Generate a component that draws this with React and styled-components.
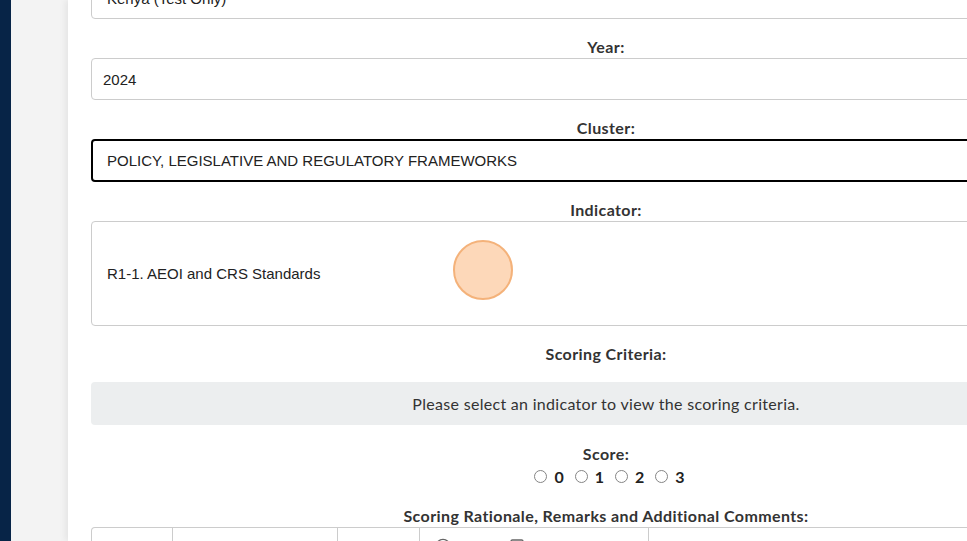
import React from "react";
import styled, { createGlobalStyle } from "styled-components";
import { Image, Link2, Smile } from "lucide-react";

const GlobalStyle = createGlobalStyle`
    html, body {
        margin: 0;
        padding: 0;
        overflow: hidden;
        background: #f3f3f3;
    }
    * { box-sizing: border-box; }
`;

const Shell = styled.div`
    display: flex;
    height: 541px;
    overflow: hidden;
`;

const Sidebar = styled.div`
    width: 11px;
    flex: none;
    background: #072447;
`;

const Gutter = styled.div`
    flex: 1;
    display: flex;
    padding-left: 57px;
    background: #f3f3f3;
    min-width: 0;
`;

const Panel = styled.div`
    flex: none;
    width: 1076px;
    padding: 0 23px;
    background: #ffffff;
    box-shadow: -3px 0 6px rgba(0, 0, 0, 0.06);
`;

const Form = styled.div`
    display: flex;
    flex-direction: column;
    gap: 18px;
    margin-top: -23px;
`;

const Field = styled.div`
    display: flex;
    flex-direction: column;
    margin-top: ${props => props.shift || 0}px;
`;

const Label = styled.div`
    font-family: Lato, "Open Sans", sans-serif;
    font-weight: 700;
    font-size: 16px;
    letter-spacing: 0.4px;
    line-height: 20px;
    color: #333333;
    text-align: center;
    margin-bottom: ${props => props.gap || 1}px;
`;

const Input = styled.div`
    display: flex;
    align-items: center;
    height: ${props => props.tall ? 105 : props.focused ? 43 : 42}px;
    padding-left: ${props => props.inset}px;
    border: ${props => props.focused ? "2px solid #000000" : "1px solid #cccccc"};
    border-radius: 4px;
    font-family: "Liberation Sans", Arial, sans-serif;
    font-size: 15px;
    color: #222222;
    background: #ffffff;
    position: relative;
`;

const Notice = styled.div`
    height: 43px;
    display: flex;
    align-items: center;
    justify-content: center;
    background: #eceeef;
    border-radius: 4px;
    font-family: Lato, "Open Sans", sans-serif;
    font-size: 16px;
    letter-spacing: 0.3px;
    color: #333333;
`;

const Radios = styled.div`
    display: flex;
    justify-content: center;
    align-items: center;
    gap: 11px;
    height: 22px;
    padding: 0 0 2px 7px;
    font-family: Lato, "Open Sans", sans-serif;
    font-weight: 700;
    font-size: 16px;
    color: #222222;
`;

const RadioLabel = styled.label`
    display: flex;
    align-items: center;
    gap: 7px;
`;

const RadioDot = styled.span`
    width: 13px;
    height: 13px;
    border-radius: 50%;
    border: 1px solid #858585;
    background: #ffffff;
`;

const Toolbar = styled.div`
    display: flex;
    height: 40px;
    border: 1px solid #cccccc;
    border-bottom: none;
    border-radius: 4px 4px 0 0;
`;

const ToolGroup = styled.div`
    width: ${props => props.width}px;
    flex: ${props => props.last ? 1 : "none"};
    display: flex;
    gap: ${props => props.spacing || 14}px;
    padding: 10px 0 0 ${props => props.pad || 14}px;
    border-right: ${props => props.last ? "none" : "1px solid #cccccc"};
    color: #666666;
`;

const Click = styled.span`
    position: absolute;
    left: 361px;
    top: 18px;
    width: 60px;
    height: 60px;
    border-radius: 50%;
    background: #fdd8b9;
    border: 2px solid #f4b27a;
`;

export default function App() {
    return (
        <Shell>
            <GlobalStyle />
            <Sidebar />
            <Gutter>
                <Panel>
                    <Form>
                        <Field>
                            <Input inset={15}>Kenya (Test Only)</Input>
                        </Field>
                        <Field>
                            <Label>Year:</Label>
                            <Input inset={11}>2024</Input>
                        </Field>
                        <Field>
                            <Label>Cluster:</Label>
                            <Input focused inset={14}>POLICY, LEGISLATIVE AND REGULATORY FRAMEWORKS</Input>
                        </Field>
                        <Field>
                            <Label>Indicator:</Label>
                            <Input tall inset={15}>
                                R1-1. AEOI and CRS Standards
                                <Click />
                            </Input>
                        </Field>
                        <Field>
                            <Label gap={18}>Scoring Criteria:</Label>
                            <Notice>Please select an indicator to view the scoring criteria.</Notice>
                        </Field>
                        <Field shift={1}>
                            <Label gap={2}>Score:</Label>
                            <Radios>
                                {[0, 1, 2, 3].map(n => (
                                    <RadioLabel key={n}>
                                        <RadioDot />
                                        {n}
                                    </RadioLabel>
                                ))}
                            </Radios>
                        </Field>
                        <Field>
                            <Label>Scoring Rationale, Remarks and Additional Comments:</Label>
                            <Toolbar>
                                <ToolGroup width={81} />
                                <ToolGroup width={165} />
                                <ToolGroup width={82} />
                                <ToolGroup width={229} pad={15} spacing={58}>
                                    <Smile size={16} />
                                    <Image size={16} />
                                </ToolGroup>
                                <ToolGroup last pad={42}>
                                    <Link2 size={16} />
                                </ToolGroup>
                            </Toolbar>
                        </Field>
                    </Form>
                </Panel>
            </Gutter>
        </Shell>
    );
}
